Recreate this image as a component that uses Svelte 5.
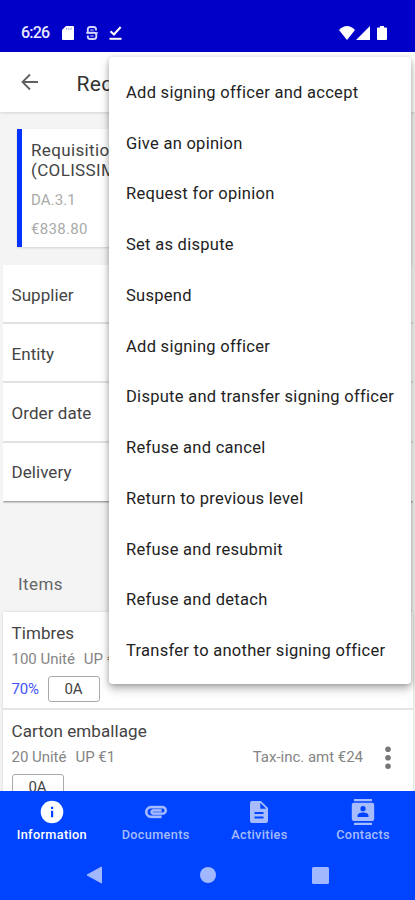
<script>
  const actions = [
    'Add signing officer and accept',
    'Give an opinion',
    'Request for opinion',
    'Set as dispute',
    'Suspend',
    'Add signing officer',
    'Dispute and transfer signing officer',
    'Refuse and cancel',
    'Return to previous level',
    'Refuse and resubmit',
    'Refuse and detach',
    'Transfer to another signing officer'
  ];
  const fields = ['Supplier', 'Entity', 'Order date', 'Delivery'];
  const items = [
    { name: 'Timbres', qty: '100 Unité', price: 'UP €7', percent: '70%', tag: '0A', total: '' },
    { name: 'Carton emballage', qty: '20 Unité', price: 'UP €1', percent: '', tag: '0A', total: 'Tax-inc. amt €24' }
  ];
</script>

<div class="screen">
  <header class="status">
    <span class="time">6:26</span>
    <svg class="sd" width="12" height="14" viewBox="0 0 12 14"><path d="M4 0h7q1 0 1 1v12q0 1-1 1H1q-1 0-1-1V4z" fill="#fff"/><path d="M4.5 1.8v2M6.8 1.8v2M9.1 1.8v2" stroke="#8c8ce8" stroke-width=".9"/></svg>
    <svg class="sync" width="12" height="14" viewBox="0 0 12 14" fill="none" stroke="#d5d5ff" stroke-width="1.9"><path d="M10 4.6V3.2Q10 1 7.8 1H4.2Q1.8 1 1.8 3.4V6.8H8Q10.3 6.8 10.3 9V10.6Q10.3 13 8 13H4.2Q1.8 13 1.8 10.8V9.6"/><path d="M0 6.8h12M4.3 4h3.4M4.3 10h3.4" stroke-width="1.2"/></svg>
    <svg class="done" width="13" height="14" viewBox="0 0 13 14" fill="none" stroke="#fff" stroke-width="2"><path d="M1.5 5.2l3.4 3.3L11.7 1"/><path d="M.5 12.8h12"/></svg>
    <span class="grow"></span>
    <svg width="16" height="14" viewBox="0 0 16 14"><path d="M0 4Q8-3.8 16 4L8 14z" fill="#fff"/></svg>
    <svg class="signal" width="14" height="14" viewBox="0 0 14 14"><path d="M14 0v14H0z" fill="#fff"/></svg>
    <svg class="battery" width="10" height="14" viewBox="0 0 10 14"><path d="M3 0h4v1.5h2q1 0 1 1V13q0 1-1 1H1q-1 0-1-1V2.5q0-1 1-1h2z" fill="#fff"/></svg>
  </header>

  <div class="appbar">
    <svg width="18" height="18" viewBox="0 0 18 18" fill="none" stroke="#606060" stroke-width="1.8"><path d="M17 9H2M9 1.5L1.5 9 9 16.5"/></svg>
    <h1>Requisition</h1>
  </div>

  <main>
    <section class="summary">
      <div class="title">Requisition<br />(COLISSIMO)</div>
      <div class="muted ref">DA.3.1</div>
      <div class="muted amount">€838.80</div>
    </section>

    <section class="fields">
      {#each fields as field}
        <div class="field">{field}</div>
      {/each}
    </section>

    <h2>Items</h2>

    <section class="items">
      {#each items as item}
        <article>
          <div class="name">{item.name}</div>
          <div class="detail">
            <span class="qty">{item.qty}</span><span>{item.price}</span>
            <span class="total">{item.total}</span>
            <svg width="6" height="24" viewBox="0 0 6 24" fill="#777"><circle cx="3" cy="4.2" r="2.8"/><circle cx="3" cy="12.7" r="2.8"/><circle cx="3" cy="21.2" r="2.8"/></svg>
          </div>
          <div class="tags">
            {#if item.percent}<span class="percent">{item.percent}</span>{/if}
            <span class="tag">{item.tag}</span>
          </div>
        </article>
      {/each}
    </section>
  </main>

  <nav>
    <div class="tab active">
      <svg width="24" height="26" viewBox="0 0 24 26"><circle cx="12" cy="13" r="11.3" fill="#fff"/><path d="M11 11.8h2.2v6.4H11zM11 7.7h2.2v2.2H11z" fill="#0044ff"/></svg>
      <span>Information</span>
    </div>
    <div class="tab">
      <svg width="26" height="26" viewBox="0 0.5 24 24"><path d="M2 12.5C2 9.46 4.46 7 7.5 7H18c2.21 0 4 1.79 4 4s-1.79 4-4 4H9.5C8.12 15 7 13.88 7 12.5S8.12 10 9.5 10H17v2H9.41c-.55 0-.55 1 0 1H18c1.1 0 2-.9 2-2s-.9-2-2-2H7.5C5.57 9 4 10.57 4 12.5S5.57 16 7.5 16H17v2H7.5C4.46 18 2 15.54 2 12.5z" fill="#a6bcff" stroke="#a6bcff" stroke-width=".4"/></svg>
      <span>Documents</span>
    </div>
    <div class="tab">
      <svg width="24" height="26" viewBox="0 0 24 26"><path d="M5 2h9l7 7v13q0 2-2 2H5q-2 0-2-2V4q0-2 2-2z" fill="#a6bcff"/><path d="M13.3 3.8v5.9h5.9z" fill="#0044ff"/><path d="M7.5 14h9M7.5 18.5h9" stroke="#0044ff" stroke-width="1.8"/></svg>
      <span>Activities</span>
    </div>
    <div class="tab">
      <svg width="24" height="26" viewBox="0 0 24 26"><path d="M3 0h18v2.2H3zM3 23.8h18V26H3z" fill="#a6bcff"/><rect x=".8" y="3.7" width="22.4" height="18.2" rx="2" fill="#a6bcff"/><circle cx="12" cy="9.7" r="2.6" fill="#0044ff"/><path d="M6.5 18v-1.2c0-4.4 11-4.4 11 0V18z" fill="#0044ff"/></svg>
      <span>Contacts</span>
    </div>
  </nav>

  <footer>
    <svg width="16" height="18" viewBox="0 0 16 18"><path d="M15.5 1v16L1 9z" fill="#a1b8ff" stroke="#a1b8ff" stroke-linejoin="round"/></svg>
    <svg class="home" width="16" height="16" viewBox="0 0 16 16"><circle cx="8" cy="8" r="8" fill="#a1b8ff"/></svg>
    <svg width="17" height="17" viewBox="0 0 17 17"><rect width="17" height="17" rx="1.5" fill="#a1b8ff"/></svg>
  </footer>

  <div class="menu" role="menu">
    {#each actions as action}
      <div class="action" role="menuitem">{action}</div>
    {/each}
  </div>
</div>

<style>
  .screen {
    position: relative;
    display: flex;
    flex-direction: column;
    width: 415px;
    height: 900px;
    overflow: hidden;
    background: #f4f4f4;
    color: #444;
    font-family: Roboto, sans-serif;
  }
  .screen * { box-sizing: border-box; }
  svg { display: block; flex: none; }
  h1, h2 { margin: 0; font-weight: 400; }
  .status {
    flex: none;
    display: flex;
    align-items: center;
    height: 52px;
    padding: 13px 28px 0 21px;
    background: #0000c9;
    color: #e8e8ff;
  }
  .time { width: 41px; font-size: 16px; font-weight: 500; line-height: 18px; letter-spacing: -.8px; }
  .sync { margin-left: 12px; }
  .done { margin-left: 11px; }
  .grow { flex: 1; }
  .signal { margin-left: 1px; }
  .battery { margin-left: 7px; }
  .appbar {
    flex: none;
    display: flex;
    align-items: center;
    height: 60px;
    padding-left: 21px;
    background: #fff;
    box-shadow: 0 1px 3px #0002;
  }
  h1 { margin-left: 37.5px; padding-top: 3px; font-size: 21px; line-height: 26px; letter-spacing: .3px; color: #333; white-space: nowrap; }
  main { flex: 1; min-height: 0; overflow: hidden; }
  .summary {
    height: 118px;
    margin: 17px 16px 0 17px;
    padding: 11px 0 0 9px;
    border-left: 5px solid #0033ff;
    background: #fff;
    box-shadow: 0 1px 2px #0002;
    white-space: nowrap;
  }
  .title { font-size: 17px; line-height: 20px; letter-spacing: .35px; }
  .muted { color: #aaa; font-size: 15px; line-height: 20px; letter-spacing: .3px; }
  .ref { margin-top: 10px; letter-spacing: .1px; }
  .amount { margin-top: 9px; }
  .fields { margin: 18px 2px 0 3px; background: #fff; box-shadow: 0 1px 2px #0007; clip-path: inset(0 0 -4px 0); }
  .field {
    display: flex;
    align-items: center;
    height: 59.2px;
    padding: 2.5px 0 0 8.5px;
    border-bottom: 2px solid #e2e2e2;
    font-size: 17px;
    letter-spacing: .06px;
  }
  .field:last-child { height: 58.4px; padding-bottom: 1.5px; border-bottom: 0; }
  h2 { height: 111px; padding: 71px 0 0 18px; font-size: 17px; line-height: 24px; letter-spacing: .4px; color: #666; }
  .items { margin: 0 2px 0 3px; background: #fff; box-shadow: 0 0 3px #0002; }
  article { height: 98px; padding: 10px 22px 0 8.5px; border-bottom: 2px solid #e5e5e5; }
  .name { font-size: 17px; line-height: 22px; letter-spacing: .08px; }
  .detail { display: flex; align-items: center; height: 24px; margin-top: 3px; color: #858585; font-size: 15px; letter-spacing: -.02px; white-space: nowrap; }
  .qty { margin-right: 9px; }
  .total { margin-left: auto; margin-right: 22px; }
  .tags { display: flex; align-items: center; margin-top: 5px; height: 26px; }
  .percent { width: 36px; color: #4352f5; font-size: 15px; letter-spacing: -.2px; }
  .tag { display: flex; align-items: center; justify-content: center; width: 52px; height: 26px; border: 1.5px solid #aaa; border-radius: 3px; font-size: 15px; }
  nav { flex: none; display: flex; height: 59px; padding-top: 8px; background: #04f; color: #a6bcff; }
  .tab { flex: 1; display: flex; flex-direction: column; align-items: center; font-size: 12.7px; line-height: 15px; letter-spacing: .35px; font-weight: 500; }
  .tab span { margin-top: 2px; }
  .active { color: #fff; }
  footer { flex: none; display: flex; align-items: center; justify-content: space-between; height: 50px; padding: 0 86px 0 86px; background: #04f; }
  .home { margin-left: 1px; }
  .menu {
    position: absolute;
    top: 57px;
    left: 109px;
    width: 302px;
    height: 627px;
    padding: 10px 0 0 17px;
    border-radius: 4px;
    background: #fff;
    color: #222;
    box-shadow: 0 5px 10px #0004, 0 1px 5px #0003;
  }
  .action { display: flex; align-items: center; height: 50.75px; font-size: 16.5px; letter-spacing: .28px; white-space: nowrap; }
</style>
